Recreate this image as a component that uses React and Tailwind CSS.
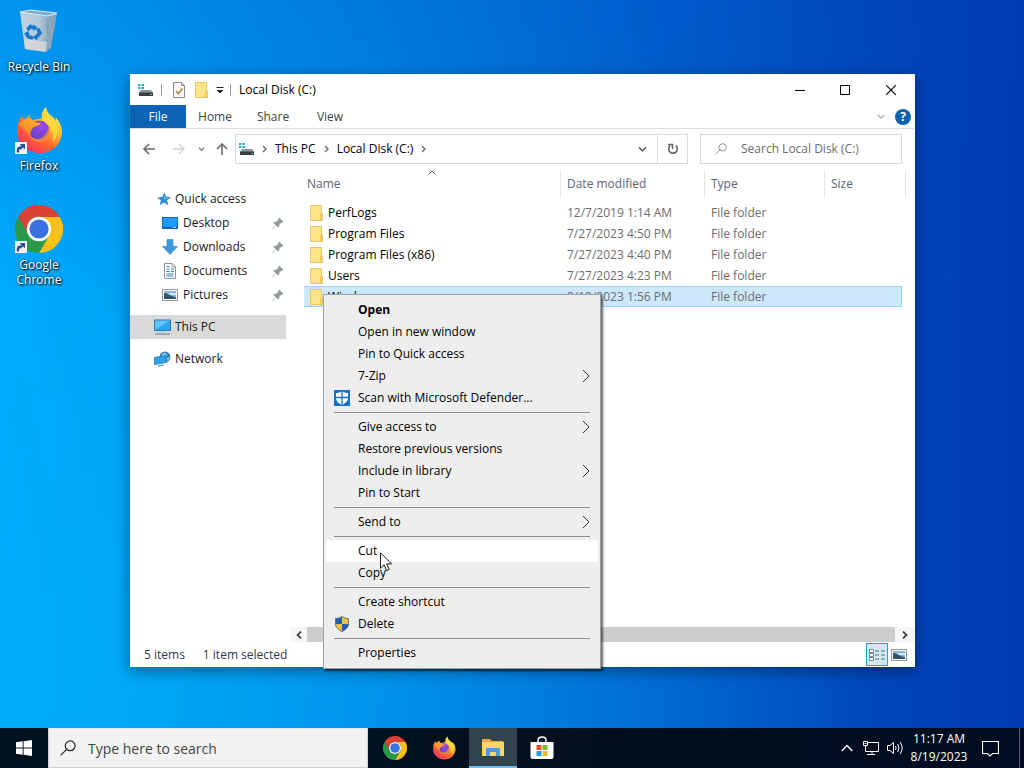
import React from "react";

/* ---------- icons ---------- */

function ChromeIcon({ className }) {
  return (
    <svg viewBox="0 0 48 48" className={className} aria-hidden="true">
      <path fill="#dc4234" d="M24 12H44.8A24 24 0 0 0 3.2 12L13.6 30A12 12 0 0 1 24 12Z" />
      <path fill="#fbc116" d="M44.8 12A24 24 0 0 1 24 48L34.4 30A12 12 0 0 0 24 12Z" />
      <path fill="#2a9a48" d="M24 48A24 24 0 0 1 3.2 12L13.6 30A12 12 0 0 0 34.4 30Z" />
      <circle cx="24" cy="24" r="12.2" fill="#fff" />
      <circle cx="24" cy="24" r="9.6" fill="#3872e0" />
    </svg>
  );
}

function FirefoxIcon({ className, id }) {
  return (
    <svg viewBox="0 0 48 48" className={className} aria-hidden="true">
      <defs>
        <linearGradient id={id + "-body"} x1="0.85" y1="0.1" x2="0.2" y2="0.95">
          <stop offset="0" stopColor="#fff04a" />
          <stop offset="0.3" stopColor="#ffbd2e" />
          <stop offset="0.6" stopColor="#ff6a2c" />
          <stop offset="1" stopColor="#f3315f" />
        </linearGradient>
        <radialGradient id={id + "-globe"} cx="0.6" cy="0.3" r="0.8">
          <stop offset="0" stopColor="#a04ae8" />
          <stop offset="1" stopColor="#5b3fc4" />
        </radialGradient>
        <linearGradient id={id + "-head"} x1="0.7" y1="0" x2="0.2" y2="1">
          <stop offset="0" stopColor="#ffae2b" />
          <stop offset="1" stopColor="#ff7a2a" />
        </linearGradient>
      </defs>
      <path
        fill={"url(#" + id + "-body)"}
        d="M7 10C7.500 12 8.500 13 10 13C12 11 13.500 10 15 9C15 11.500 16 13.500 18 14L27 12C26 8 28 3.500 31 1C31.500 5.500 34 8.500 38 11L41 15L40.500 11C45 16 47 21 47 27C46 39 37 47 25 47C12 47 2 38 2 26C2 19 4 13 7 10Z"
      />
      <circle cx="24.500" cy="24.500" r="10" fill={"url(#" + id + "-globe)"} />
      <path
        fill={"url(#" + id + "-head)"}
        d="M4 18C7 14 12 12 17 14C19 16 22 17 26 17C25 19.500 21 20 19 21C17 23 15 25 15.500 30C11 27 7 21 4 18Z"
      />
      <path
        fill="#ffdc3e"
        fillOpacity="0.8"
        d="M31 2C31 8 37 11 41 17C44 23 43 31 38 36C39 29 37 22 32 18C28 15 26 11 27 8Z"
      />
      <path fill="#ff9a30" fillOpacity="0.7" d="M34 20C37 28 33 36 24 36C19 36 16 33 15 29C17 34 30 37 34 20Z" />
    </svg>
  );
}

function RecycleBinIcon() {
  return (
    <svg viewBox="0 0 48 48" className="size-12" aria-hidden="true">
      <defs>
        <linearGradient id="bin" x1="0" x2="1">
          <stop offset="0" stopColor="#c3d6e6" />
          <stop offset="0.65" stopColor="#b3c8da" />
          <stop offset="1" stopColor="#93acc0" />
        </linearGradient>
      </defs>
      <path d="M5 5L33 9L31 45L10 42Z" fill="url(#bin)" />
      <path d="M33 9L42 6L36 41L31 45Z" fill="#8ba5bb" />
      <path d="M5 5L15 3L42 6L33 9Z" fill="#79a9cb" stroke="#dce8f0" strokeWidth="1.200" />
      <path d="M9 32L32 35L31 45L10 42Z" fill="#dcd8d6" fillOpacity="0.75" />
      <g fill="none" stroke="#1478cc" strokeWidth="3.600">
        <path d="M12.500 23L15.500 19.500L19.500 21" />
        <path d="M22.500 21.500L25 26L22 29.500" />
        <path d="M18 31L13.500 30L11.500 27" />
      </g>
      <path fill="#1478cc" d="M19 17.500L22.500 21L18 24ZM22.500 26.500V33.500L17.500 30.500ZM8.500 27L13 24L15 29Z" />
    </svg>
  );
}

function ShortcutBadge() {
  return (
    <svg viewBox="0 0 12 12" className="absolute bottom-0 left-0 size-3" aria-hidden="true">
      <rect width="12" height="12" fill="#f4f6fa" />
      <path d="M3 10.500V8.500Q3 5.500 6 5.500" fill="none" stroke="#2c4f9c" strokeWidth="2.400" />
      <path d="M4.500 2H10V7.500Z" fill="#2c4f9c" />
      <path d="M5 7L8 4" stroke="#2c4f9c" strokeWidth="2" />
    </svg>
  );
}

function DriveIcon() {
  return (
    <svg viewBox="0 0 16 14" className="h-3.5 w-4 shrink-0" aria-hidden="true">
      <path fill="#20b4c8" d="M1 1h2.500v2H1zM4.500 1H7v2H4.500zM1 4h2.500v2H1zM4.500 4H7v2H4.500z" />
      <path fill="#90959b" d="M4 7h10l2 3H2z" />
      <path fill="#363c42" d="M2 9.500h14V13H2z" />
      <path fill="#39c480" d="M13 11h2v1h-2z" />
    </svg>
  );
}

function FolderIcon({ className = "h-4 w-3.5" }) {
  return (
    <svg viewBox="0 0 14 16" className={className + " shrink-0"} aria-hidden="true">
      <path d="M1.500 0.500H12.500V15.500H1.500Z" fill="#ffe48a" stroke="#eac760" />
      <path d="M11.500 9.500L13.500 8.500V15.500H11Z" fill="#f6d366" stroke="#e4bd50" strokeWidth="0.700" />
    </svg>
  );
}

function StarIcon() {
  return (
    <svg viewBox="0 0 16 16" className="size-3.5" aria-hidden="true">
      <path d="M8.500 0.500L10.500 5.500L16 6L11.500 9.500L13 15.500L8 12L3 15L4.500 9.500L0 6.500L6 5.500Z" fill="#2b8dd8" />
      <path d="M8.500 3L9.700 6.500L13 7L8 8.500Z" fill="#74bdf0" />
    </svg>
  );
}

function DesktopIcon() {
  return (
    <svg viewBox="0 0 16 14" className="h-3.5 w-4" aria-hidden="true">
      <rect x="0.500" y="1.500" width="15" height="11" fill="#1f9bf7" stroke="#1569b4" />
      <path d="M1 11.500h14" stroke="#1561a5" />
      <path d="M11 11.500h3" stroke="#93d0ff" />
    </svg>
  );
}

function DownloadIcon() {
  return (
    <svg viewBox="0 0 16 16" className="size-4" aria-hidden="true">
      <path d="M5 0.500H11V7.500H15.500L8 15.500L0.500 7.500H5Z" fill="#3f97db" stroke="#2c7fc0" strokeWidth="0.600" />
    </svg>
  );
}

function DocumentIcon() {
  return (
    <svg viewBox="0 0 16 16" className="size-4" aria-hidden="true">
      <path d="M2.500 0.500H10L13.500 3.500V15.500H2.500Z" fill="#fff" stroke="#8b949c" />
      <path d="M4.500 3.500h3M4.500 6h3M9 6h3M9 8.500h3M4.500 11h7M4.500 13h7M4.500 8.500h3" stroke="#2f80be" strokeWidth="1.200" />
      <path d="M10 0.500V4H13.500" fill="none" stroke="#8b949c" strokeWidth="0.800" />
    </svg>
  );
}

function PictureIcon() {
  return (
    <svg viewBox="0 0 16 14" className="h-3.5 w-4" aria-hidden="true">
      <rect x="0.500" y="1.500" width="15" height="11" fill="#fff" stroke="#9298a0" />
      <path fill="#84b8e6" d="M2 3h12v8H2z" />
      <path fill="#d7e8f5" d="M7 5h7v2H7z" />
      <path fill="#35546b" d="M2 5C5 5 7 7 10 8L14 9.500V11H2z" />
    </svg>
  );
}

function ComputerIcon() {
  return (
    <svg viewBox="0 0 17 16" className="h-4 w-[17px]" aria-hidden="true">
      <rect x="0.500" y="1" width="16" height="10.500" fill="#5cc3f8" stroke="#3776a8" />
      <path d="M1 11L16 1.500V11Z" fill="#2ba5ee" />
      <path d="M5.500 12h6v1.500h-6z" fill="#a5cde6" />
      <path d="M1 15h15" stroke="#5d7f99" />
    </svg>
  );
}

function NetworkIcon() {
  return (
    <svg viewBox="0 0 17 16" className="h-4 w-[17px]" aria-hidden="true">
      <circle cx="11" cy="6" r="5.500" fill="#3b83b5" />
      <path d="M8 3C10 1 13 2 13 4S10 7 8 6ZM12 7L16 6L14 10Z" fill="#87cbea" />
      <path d="M0.500 6.500L12 4.500V11.500L0.500 13.500Z" fill="#2aa3ea" stroke="#2b6fa3" strokeWidth="0.800" />
      <path d="M4 15L10 14" stroke="#68a9cf" strokeWidth="1.400" />
    </svg>
  );
}

function PinIcon() {
  return (
    <svg viewBox="0 0 12 12" className="size-3" aria-hidden="true">
      <path d="M7 0.500L11.500 5L10.300 5.700L9.500 5.400L7.300 7.700L7.200 10L6.300 10.600L3.900 8.200L0.700 11.700L0.300 11.300L3.700 8L1.400 5.700L2 4.800L4.300 4.700L6.600 2.500L6.300 1.700Z" fill="#929a9f" />
    </svg>
  );
}

function SmallChevron({ className = "" }) {
  return (
    <svg viewBox="0 0 5 8" className={"h-2 w-[5px] shrink-0 " + className} aria-hidden="true">
      <path d="M1 1L4 4L1 7" fill="none" stroke="#6b6b6b" strokeWidth="1.400" />
    </svg>
  );
}

function DownChevron({ className }) {
  return (
    <svg viewBox="0 0 10 6" className={className} aria-hidden="true">
      <path d="M1 1L5 5L9 1" fill="none" stroke="currentColor" strokeWidth="1.800" />
    </svg>
  );
}

function MagnifierIcon({ className }) {
  return (
    <svg viewBox="0 0 16 16" className={className} aria-hidden="true">
      <circle cx="10.200" cy="5.800" r="4.900" fill="none" stroke="currentColor" strokeWidth="1.200" />
      <path d="M6.700 9.300L0.600 15.400" stroke="currentColor" strokeWidth="1.200" />
    </svg>
  );
}

function DefenderIcon() {
  return (
    <svg viewBox="0 0 16 16" className="size-4" aria-hidden="true">
      <rect width="16" height="16" fill="#1272cb" />
      <path d="M8 1C10 2.500 12 3 14 3V8C14 11.500 11 13.500 8 15C5 13.500 2 11.500 2 8V3C4 3 6 2.500 8 1Z" fill="#fff" />
      <path d="M8 1V15M2 7.500H14" stroke="#1272cb" strokeWidth="1.300" />
    </svg>
  );
}

function AdminShieldIcon() {
  return (
    <svg viewBox="0 0 16 16" className="size-4" aria-hidden="true">
      <path d="M8 0.500C10 2 12 2.500 14.500 2.500V7.500C14.500 12 11 14 8 15.500C5 14 1.500 12 1.500 7.500V2.500C4 2.500 6 2 8 0.500Z" fill="#f2c24c" />
      <path d="M8 0.500V8H1.500V2.500C4 2.500 6 2 8 0.500ZM8 8H14.500C14.200 12 11 14 8 15.500Z" fill="#1f62ad" />
      <path d="M8 0.500C10 2 12 2.500 14.500 2.500V7.500C14.500 12 11 14 8 15.500C5 14 1.500 12 1.500 7.500V2.500C4 2.500 6 2 8 0.500Z" fill="none" stroke="#5d646a" strokeWidth="0.900" />
    </svg>
  );
}

/* ---------- desktop ---------- */

function DesktopShortcut({ label, children, shortcut }) {
  return (
    <button type="button" className="flex w-[78px] flex-col items-center gap-1">
      <span className="relative block size-12">
        {children}
        {shortcut && <ShortcutBadge />}
      </span>
      <span className="text-[12px] leading-[15px] text-white [text-shadow:1px_1px_2px_#000,0_0_3px_#000a]">{label}</span>
    </button>
  );
}

/* ---------- explorer ---------- */

const quickItems = [
  ["Desktop", DesktopIcon],
  ["Downloads", DownloadIcon],
  ["Documents", DocumentIcon],
  ["Pictures", PictureIcon],
];

const files = [
  ["PerfLogs", "12/7/2019 1:14 AM"],
  ["Program Files", "7/27/2023 4:50 PM"],
  ["Program Files (x86)", "7/27/2023 4:40 PM"],
  ["Users", "7/27/2023 4:23 PM"],
  ["Windows", "8/18/2023 1:56 PM"],
];

function TitleBar() {
  return (
    <div className="flex h-[31px] items-center pl-[7px]">
      <DriveIcon />
      <span className="ml-2 h-3 w-px bg-[#9a9a9a]" />
      <button type="button" aria-label="Properties" className="ml-2.5">
        <svg viewBox="0 0 14 16" className="h-4 w-3.5" aria-hidden="true">
          <path d="M1.500 0.500H9.500L12.500 3.500V15.500H1.500Z" fill="#fafafa" stroke="#8a8a8a" />
          <path d="M9.500 0.500V3.500H12.500" fill="none" stroke="#8a8a8a" />
          <path d="M4 9L6.500 11.500L10.500 6.500" fill="none" stroke="#b5803c" strokeWidth="1.700" />
        </svg>
      </button>
      <button type="button" aria-label="New folder" className="ml-2">
        <FolderIcon className="h-4 w-3.5" />
      </button>
      <button type="button" aria-label="Customize toolbar" className="ml-2">
        <svg viewBox="0 0 8 8" className="size-2" aria-hidden="true">
          <path d="M0.500 1.500H7.500" stroke="#222" />
          <path d="M0.500 4H7.500L4 7.500Z" fill="#222" />
        </svg>
      </button>
      <span className="ml-1.5 h-3 w-px bg-[#9a9a9a]" />
      <h1 className="ml-2 text-[12px] text-black">Local Disk (C:)</h1>
      <div className="ml-auto flex self-stretch text-black">
        <button type="button" aria-label="Minimize" className="flex w-[45px] items-center justify-center">
          <svg viewBox="0 0 10 10" className="size-2.5" aria-hidden="true"><path d="M0 5.500H10" stroke="currentColor" /></svg>
        </button>
        <button type="button" aria-label="Maximize" className="flex w-[45px] items-center justify-center">
          <svg viewBox="0 0 10 10" className="size-2.5" aria-hidden="true"><path d="M0.500 0.500H9.500V9.500H0.500Z" fill="none" stroke="currentColor" /></svg>
        </button>
        <button type="button" aria-label="Close" className="flex w-[47px] items-center justify-center">
          <svg viewBox="0 0 10 10" className="size-2.5" aria-hidden="true"><path d="M0 0L10 10M10 0L0 10" stroke="currentColor" strokeWidth="1.100" /></svg>
        </button>
      </div>
    </div>
  );
}

function Ribbon() {
  return (
    <nav className="flex h-6 items-stretch border-b border-[#dcdddf] text-[12px] text-[#444]">
      <button type="button" className="w-14 bg-[#0b63b5] text-white">File</button>
      <button type="button" className="w-[58px]">Home</button>
      <button type="button" className="w-[58px]">Share</button>
      <button type="button" className="w-14">View</button>
      <div className="ml-auto flex items-center gap-2.5 pr-[3px]">
        <button type="button" aria-label="Expand the ribbon" className="text-[#b5b5b5]">
          <DownChevron className="h-[5px] w-2" />
        </button>
        <button type="button" aria-label="Help" className="flex size-4 items-center justify-center rounded-full bg-[#0b63ad] text-[12px] font-bold leading-4 text-white">?</button>
      </div>
    </nav>
  );
}

function ArrowIcon({ d }) {
  return (
    <svg viewBox="0 0 14 12" className="h-3 w-3.5" aria-hidden="true">
      <path d={d} fill="none" stroke="currentColor" strokeWidth="1.600" />
    </svg>
  );
}

function AddressRow() {
  return (
    <div className="flex items-center px-3 pb-1.5 pt-[5px] text-[12px]">
      <button type="button" aria-label="Back" className="text-[#6b6b6b]"><ArrowIcon d="M7 1L2 6L7 11M2 6H13" /></button>
      <button type="button" aria-label="Forward" className="ml-4 text-[#d4d4d4]"><ArrowIcon d="M7 1L12 6L7 11M12 6H1" /></button>
      <button type="button" aria-label="Recent locations" className="ml-3 text-[#777]"><DownChevron className="h-1 w-[7px]" /></button>
      <button type="button" aria-label="Up" className="ml-2.5 text-[#6b6b6b]"><ArrowIcon d="M2 6L7 1L12 6M7 1V12" /></button>
      <div className="ml-1.5 flex h-[30px] flex-1 items-center border border-[#d9d9d9] pl-0.5">
        <DriveIcon />
        <SmallChevron className="ml-2" />
        <button type="button" className="ml-2">This PC</button>
        <SmallChevron className="ml-2" />
        <button type="button" className="ml-2">Local Disk (C:)</button>
        <SmallChevron className="ml-2" />
        <button type="button" aria-label="Previous locations" className="ml-auto mr-2.5 text-[#666]"><DownChevron className="h-[6px] w-[9px]" /></button>
        <button type="button" aria-label="Refresh" className="flex h-full w-[30px] items-center justify-center border-l border-[#d9d9d9] text-[#666]">
          <svg viewBox="0 0 12 12" className="size-3" aria-hidden="true">
            <path d="M8.800 2.600A4.300 4.300 0 1 1 3.200 2.600" fill="none" stroke="currentColor" strokeWidth="1.600" />
            <path d="M1 1.500H5.500V6" fill="none" stroke="currentColor" strokeWidth="1.500" />
          </svg>
        </button>
      </div>
      <label className="ml-3 flex h-[30px] w-[202px] items-center gap-3.5 border border-[#d9d9d9] pl-3.5 text-[#8a8a8a]">
        <MagnifierIcon className="size-3 shrink-0" />
        <input type="search" aria-label="Search Local Disk (C:)" placeholder="Search Local Disk (C:)" className="w-full min-w-0 bg-transparent outline-none placeholder:text-[#6d6d6d]" />
      </label>
    </div>
  );
}

function Sidebar() {
  return (
    <aside className="w-[156px] shrink-0 pt-[17px] text-[12px] text-[#1a1a1a]">
      <a href="#quick" className="flex h-6 items-center gap-1 pl-[27px]"><StarIcon />Quick access</a>
      {quickItems.map(([name, Icon]) => (
        <a key={name} href={"#" + name} className="flex h-6 items-center pl-8">
          <Icon />
          <span className="ml-[5px]">{name}</span>
          <span className="ml-auto mr-0.5"><PinIcon /></span>
        </a>
      ))}
      <a href="#pc" className="mt-2 flex h-6 items-center gap-1 bg-[#d9d9d9] pl-6"><ComputerIcon />This PC</a>
      <a href="#network" className="mt-2 flex h-6 items-center gap-1 pl-6"><NetworkIcon />Network</a>
    </aside>
  );
}

function FileTable() {
  return (
    <table className="w-full table-fixed border-separate border-spacing-0 text-left text-[12px] text-[#6d6d6d]">
      <colgroup>
        <col />
        <col className="w-36" />
        <col className="w-[120px]" />
        <col className="w-[77px]" />
        <col className="w-1" />
      </colgroup>
      <thead className="text-[#5c6475]">
        <tr className="h-7">
          <th className="relative border-r border-[#e5e5e5] pl-[3px] font-normal">
            Name
            <svg viewBox="0 0 8 5" className="absolute left-1/2 top-0 h-[5px] w-2 -translate-x-1/2" aria-hidden="true">
              <path d="M0.500 4.500L4 1L7.500 4.500" fill="none" stroke="#555" />
            </svg>
          </th>
          <th className="border-r border-[#e5e5e5] pl-1.5 font-normal">Date modified</th>
          <th className="border-r border-[#e5e5e5] pl-1.5 font-normal">Type</th>
          <th colSpan={2} className="border-r border-[#e5e5e5] pl-1.5 font-normal">Size</th>
        </tr>
      </thead>
      <tbody>
        <tr className="h-1"><td colSpan={5} /></tr>
        {files.map(([name, date]) => {
          const selected = name === "Windows";
          const cell = selected ? "border-y border-[#99d1f5] bg-[#cce8fb] p-0" : "p-0";
          return (
            <tr key={name} className="h-[21px]" aria-selected={selected}>
              <td className={cell}>
                <span className="flex items-center gap-[5px] pl-[5px] leading-4 text-black"><FolderIcon />{name}</span>
              </td>
              <td className={cell}><span className="block pl-1.5 leading-4">{date}</span></td>
              <td className={cell}><span className="block pl-1.5 leading-4">File folder</span></td>
              <td className={selected ? cell + " border-r" : cell} />
              <td className="p-0" />
            </tr>
          );
        })}
      </tbody>
    </table>
  );
}

function ScrollBar() {
  return (
    <div className="flex h-[15px] items-stretch bg-[#f6f6f6]">
      <button type="button" aria-label="Scroll left" className="flex w-[17px] items-center justify-center text-[#444]">
        <svg viewBox="0 0 6 8" className="h-2 w-1.5" aria-hidden="true"><path d="M5 0.500L1.500 4L5 7.500" fill="none" stroke="currentColor" strokeWidth="1.800" /></svg>
      </button>
      <span className="flex-1 bg-[#cdcdcd]" />
      <button type="button" aria-label="Scroll right" className="flex w-[19px] items-center justify-center text-[#444]">
        <svg viewBox="0 0 6 8" className="h-2 w-1.5" aria-hidden="true"><path d="M1 0.500L4.500 4L1 7.500" fill="none" stroke="currentColor" strokeWidth="1.800" /></svg>
      </button>
    </div>
  );
}

function ExplorerWindow() {
  return (
    <section className="absolute bottom-[61px] left-[129px] right-[109px] top-[74px] flex flex-col border-x border-l-[#1b7fd0] border-r-white bg-white shadow-[0_4px_14px_#0006]">
      <TitleBar />
      <Ribbon />
      <AddressRow />
      <div className="flex min-h-0 flex-1">
        <Sidebar />
        <div className="flex min-w-0 flex-1 flex-col pl-1">
          <div className="min-h-0 flex-1 pl-3.5 pr-2"><FileTable /></div>
          <ScrollBar />
        </div>
      </div>
      <footer className="flex h-[25px] items-center pl-3.5 pr-[7px] text-[12px] text-[#2c3850]">
        <span>5 items</span>
        <span className="ml-[18px]">1 item selected</span>
        <button type="button" aria-label="Details view" className="ml-auto flex h-[23px] w-[22px] items-center justify-center border border-[#26a0c4] bg-[#cfeaf2]">
          <svg viewBox="0 0 16 14" className="h-3.5 w-4" aria-hidden="true">
            <path d="M0.500 1.500h4v3h-4zM0.500 5.500h4v3h-4zM0.500 9.500h4v3h-4z" fill="#fff" stroke="#6f8796" />
            <path d="M6 3h4M12 3h4M6 7h4M12 7h4M6 11h4M12 11h4" stroke="#526b7a" />
          </svg>
        </button>
        <button type="button" aria-label="Thumbnail view" className="ml-[3px]"><PictureIcon /></button>
      </footer>
    </section>
  );
}

/* ---------- context menu ---------- */

const menuGroups = [
  [
    { label: "Open", bold: true },
    { label: "Open in new window" },
    { label: "Pin to Quick access" },
    { label: "7-Zip", sub: true },
    { label: "Scan with Microsoft Defender...", Icon: DefenderIcon },
  ],
  [
    { label: "Give access to", sub: true },
    { label: "Restore previous versions" },
    { label: "Include in library", sub: true },
    { label: "Pin to Start" },
  ],
  [{ label: "Send to", sub: true }],
  [{ label: "Cut", active: true }, { label: "Copy" }],
  [{ label: "Create shortcut" }, { label: "Delete", Icon: AdminShieldIcon }],
  [{ label: "Properties" }],
];

function ContextMenu() {
  return (
    <div role="menu" className="absolute left-[323px] top-[294px] w-[278px] border border-[#a0a0a0] bg-[#eeeeee] px-0.5 py-1 text-[12px] text-black shadow-[2px_2px_2px_#0009]">
      {menuGroups.map((group, i) => (
        <div key={group[0].label} role="group">
          {i > 0 && <div role="separator" className="mx-2 my-[3px] h-px bg-[#8f8f8f]" />}
          {group.map(({ label, bold, sub, active, Icon }) => (
            <button
              key={label}
              type="button"
              role="menuitem"
              className={
                "flex h-[22px] w-full items-center pl-2 pr-2 text-left " +
                (active ? "bg-white " : "") +
                (bold ? "font-bold" : "")
              }
            >
              <span className="w-6 shrink-0">{Icon && <Icon />}</span>
              <span className="flex-1 whitespace-nowrap">{label}</span>
              {sub && (
                <svg viewBox="0 0 8 14" className="h-3.5 w-2" aria-hidden="true">
                  <path d="M1 1L7 7L1 13" fill="none" stroke="#333" />
                </svg>
              )}
            </button>
          ))}
        </div>
      ))}
    </div>
  );
}

function Pointer() {
  return (
    <svg viewBox="0 0 12 20" className="pointer-events-none absolute left-[380px] top-[552px] h-5 w-3" aria-hidden="true">
      <path d="M0.500 0.700V16.300L4.100 12.800L6.700 18.600L9.200 17.500L6.700 11.900H11.500Z" fill="#fff" stroke="#000" strokeWidth="0.900" />
    </svg>
  );
}

/* ---------- taskbar ---------- */

function Taskbar() {
  return (
    <footer className="flex h-10 shrink-0 items-stretch bg-linear-to-r from-[#02131f] to-[#010c20] text-white">
      <button type="button" aria-label="Start" className="flex w-12 shrink-0 items-center justify-center">
        <svg viewBox="0 0 16 16" className="size-4" aria-hidden="true">
          <path fill="#fff" d="M0 2.200L6.700 1.300V7.500H0ZM7.600 1.200L16 0V7.500H7.600ZM0 8.500H6.700V14.700L0 13.800ZM7.600 8.500H16V16L7.600 14.800Z" />
        </svg>
      </button>
      <label className="flex w-80 items-center gap-3 border border-[#d0d0d0] border-t-[#dbe9ee] bg-[#f2f2f2] pl-[11px] text-[#222]">
        <MagnifierIcon className="size-4 shrink-0" />
        <input type="search" aria-label="Type here to search" placeholder="Type here to search" className="w-full min-w-0 bg-transparent text-[14px] outline-none placeholder:text-[#444]" />
      </label>
      <div className="ml-[3px] flex gap-px">
        <button type="button" aria-label="Google Chrome" className="flex w-12 items-center justify-center"><ChromeIcon className="size-6" /></button>
        <button type="button" aria-label="Firefox" className="flex w-12 items-center justify-center"><FirefoxIcon id="ff-task" className="size-6" /></button>
        <button type="button" aria-label="File Explorer" className="flex w-12 items-center justify-center border-b-2 border-[#76b9ed] bg-[#33434e]">
          <svg viewBox="0 0 24 20" className="mt-0.5 h-5 w-6" aria-hidden="true">
            <path d="M1 1H9L11 3H22V18H1Z" fill="#e6a93c" />
            <path d="M1 4H23V18H1Z" fill="#fbd768" />
            <path d="M5 18V11Q5 10 6 10H18Q19 10 19 11V18H15V14H9V18Z" fill="#4a9fd6" />
          </svg>
        </button>
        <button type="button" aria-label="Microsoft Store" className="flex w-12 items-center justify-center">
          <svg viewBox="0 0 24 24" className="size-6" aria-hidden="true">
            <path d="M8 7V4.500Q8 1 12 1T16 4.500V7" fill="none" stroke="#fff" strokeWidth="1.400" />
            <path d="M0.500 6H23.500V21Q23.500 23 21.500 23H2.500Q0.500 23 0.500 21Z" fill="#fff" />
            <path d="M6.500 9h5v5h-5z" fill="#e2502b" />
            <path d="M12.500 9h5v5h-5z" fill="#7cb52c" />
            <path d="M6.500 15h5v5h-5z" fill="#1d9fe0" />
            <path d="M12.500 15h5v5h-5z" fill="#f4b51f" />
          </svg>
        </button>
      </div>
      <div className="ml-auto flex items-center">
        <button type="button" aria-label="Show hidden icons">
          <svg viewBox="0 0 12 8" className="h-2 w-3" aria-hidden="true"><path d="M0.700 7L6 1.500L11.300 7" fill="none" stroke="#fff" strokeWidth="1.300" /></svg>
        </button>
        <button type="button" aria-label="Network" className="ml-2.5">
          <svg viewBox="0 0 16 14" className="h-3.5 w-4" fill="none" stroke="#fff" aria-hidden="true">
            <path d="M5 1.500H15.500V10.500H2.500V5M9 10.500V13M4 13.500H12" />
            <path d="M0.500 0.500H4.500V4.500H0.500ZM1.500 2.500H3.500" />
          </svg>
        </button>
        <button type="button" aria-label="Volume" className="ml-2">
          <svg viewBox="0 0 17 14" className="h-3.5 w-[17px]" fill="none" stroke="#fff" aria-hidden="true">
            <path d="M0.500 4.500H3L6.500 1.500V12.500L3 9.500H0.500Z" />
            <path d="M8.500 5Q9.700 7 8.500 9M10.700 3Q13.200 7 10.700 11M13.200 1.200Q17.200 7 13.200 12.800" />
          </svg>
        </button>
        <button type="button" className="w-[70px] text-center text-[12px] leading-[18px]">
          <span className="block">11:17 AM</span>
          <span className="block">8/19/2023</span>
        </button>
        <button type="button" aria-label="Notifications" className="ml-2">
          <svg viewBox="0 0 17 17" className="size-[17px]" aria-hidden="true">
            <path d="M0.500 1.500H16.500V13.500H10.500L8 16L5.500 13.500H0.500Z" fill="none" stroke="#fff" strokeWidth="1.200" />
          </svg>
        </button>
        <button type="button" aria-label="Show desktop" className="ml-5 h-10 w-[5px] border-l border-[#55606e]" />
      </div>
    </footer>
  );
}

export default function App() {
  return (
    <div className="flex min-h-screen flex-col overflow-hidden bg-[linear-gradient(90deg,#00a8fa_0%,#00a0f4_12%,#0086e4_38%,#0068d2_60%,#0048bc_84%,#003ab2_100%)] font-['Open_Sans','Noto_Sans',sans-serif]">
      <main className="relative flex-1 bg-[radial-gradient(ellipse_at_5%_90%,#00b8ff66_0%,#00b8ff00_60%),linear-gradient(180deg,#0040c033_0%,#0040c000_40%)]">
        <div className="flex flex-col items-start">
          <div className="flex flex-col gap-8 pt-[7px]">
            <DesktopShortcut label="Recycle Bin"><RecycleBinIcon /></DesktopShortcut>
            <DesktopShortcut label="Firefox" shortcut><FirefoxIcon id="ff-desk" className="size-12" /></DesktopShortcut>
            <div className="px-1.5 -mx-1.5">
              <DesktopShortcut label={<>Google<br />Chrome</>} shortcut><ChromeIcon className="size-12" /></DesktopShortcut>
            </div>
          </div>
        </div>
        <ExplorerWindow />
        <ContextMenu />
        <Pointer />
      </main>
      <Taskbar />
    </div>
  );
}
